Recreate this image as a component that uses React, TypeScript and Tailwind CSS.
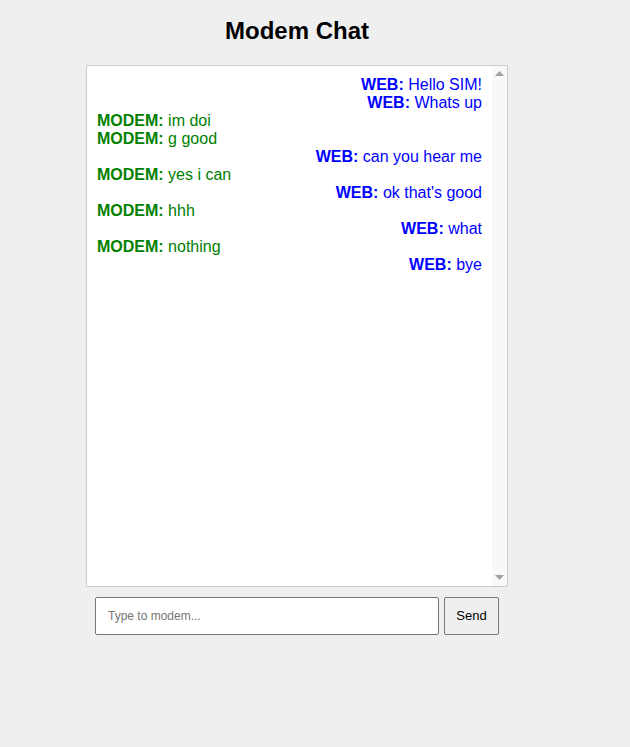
import React from "react";

const messages: { from: "WEB" | "MODEM"; text: string }[] = [
  { from: "WEB", text: "Hello SIM!" },
  { from: "WEB", text: "Whats up" },
  { from: "MODEM", text: "im doi" },
  { from: "MODEM", text: "g good" },
  { from: "WEB", text: "can you hear me" },
  { from: "MODEM", text: "yes i can" },
  { from: "WEB", text: "ok that's good" },
  { from: "MODEM", text: "hhh" },
  { from: "WEB", text: "what" },
  { from: "MODEM", text: "nothing" },
  { from: "WEB", text: "bye" },
];

export default function App() {
  return (
    <div
      className="min-h-[747px] bg-[#efefef] pl-[86px] pt-[17px]"
      style={{ fontFamily: '"Liberation Sans", Arial, sans-serif' }}
    >
      <div className="w-[422px] flex flex-col">
        <h2 className="text-[24px] leading-[28px] font-bold text-center text-black">Modem Chat</h2>
        <div className="mt-[20px] h-[522px] border border-[#cccccc] bg-white flex">
          <div className="flex-1 pt-[10px] pl-[10px] pr-[10px]">
            {messages.map((m, i) =>
              m.from === "WEB" ? (
                <div key={i} className="text-right text-[16px] leading-[18px] text-[#0000ff]">
                  <b>WEB:</b> {m.text}
                </div>
              ) : (
                <div key={i} className="text-left text-[16px] leading-[18px] text-[#008000]">
                  <b>MODEM:</b> {m.text}
                </div>
              )
            )}
          </div>
          <div className="w-[15px] bg-[#f8f8f8] flex flex-col justify-between items-center pt-[5px] pb-[6px]">
            <svg width="9" height="5" viewBox="0 0 9 5">
              <polygon points="0,5 9,5 4.5,0" fill="#a0a0a0" />
            </svg>
            <svg width="9" height="5" viewBox="0 0 9 5">
              <polygon points="0,0 9,0 4.5,5" fill="#a0a0a0" />
            </svg>
          </div>
        </div>
        <div className="mt-[10px] px-[9px] flex gap-[5px]">
          <input
            className="w-[344px] h-[38px] border border-[#767676] rounded-[2px] bg-white px-[12px] text-[12px] outline-none placeholder:text-[#757575]"
            placeholder="Type to modem..."
          />
          <button className="w-[55px] h-[38px] border border-[#767676] rounded-[2px] bg-[#efefef] text-[13px] text-black">
            Send
          </button>
        </div>
      </div>
    </div>
  );
}
